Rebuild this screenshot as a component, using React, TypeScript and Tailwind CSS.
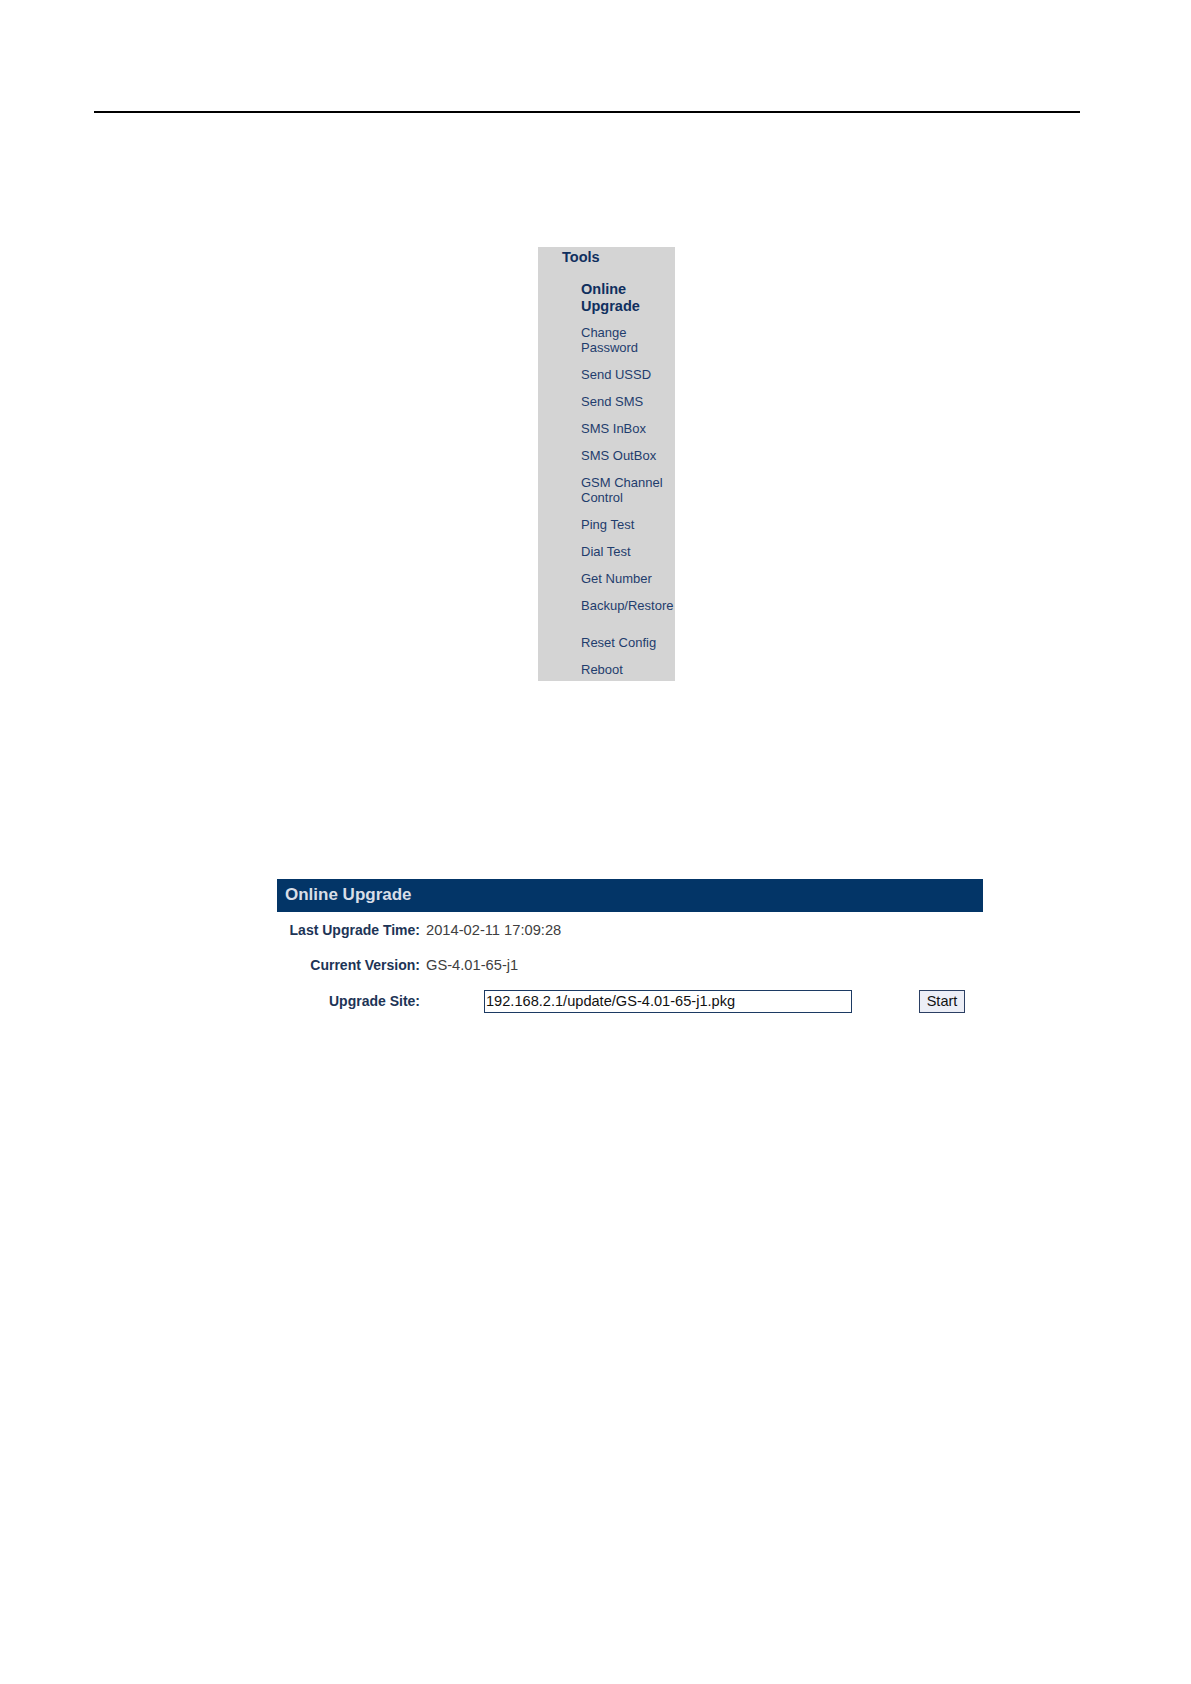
const menuItems: { lines: string[]; mt: string }[] = [
  { lines: ['Change', 'Password'], mt: 'mt-[10px]' },
  { lines: ['Send USSD'], mt: 'mt-[12px]' },
  { lines: ['Send SMS'], mt: 'mt-[12px]' },
  { lines: ['SMS InBox'], mt: 'mt-[12px]' },
  { lines: ['SMS OutBox'], mt: 'mt-[12px]' },
  { lines: ['GSM Channel', 'Control'], mt: 'mt-[12px]' },
  { lines: ['Ping Test'], mt: 'mt-[12px]' },
  { lines: ['Dial Test'], mt: 'mt-[12px]' },
  { lines: ['Get Number'], mt: 'mt-[12px]' },
  { lines: ['Backup/Restore'], mt: 'mt-[12px]' },
  { lines: ['Reset Config'], mt: 'mt-[22px]' },
  { lines: ['Reboot'], mt: 'mt-[12px]' },
];

function ToolsMenu() {
  return (
    <div className="ml-[538px] w-[137px] bg-[#d4d4d4] pt-px pb-[4px]">
      <div className="pl-[24px] text-[14.5px] leading-[18px] font-bold text-[#0f2f5e]">Tools</div>
      <div className="mt-[14.5px] flex flex-col pl-[43px]">
        <div className="text-[14.5px] leading-[17px] font-bold text-[#0f2f5e] whitespace-nowrap">
          Online
          <br />
          Upgrade
        </div>
        {menuItems.map((item) => (
          <div
            key={item.lines.join(' ')}
            className={`text-[13px] leading-[15px] text-[#1f3d6d] whitespace-nowrap ${item.mt}`}
          >
            {item.lines.map((l, i) => (
              <div key={i}>{l}</div>
            ))}
          </div>
        ))}
      </div>
    </div>
  );
}

function OnlineUpgrade() {
  return (
    <div className="ml-[277px] w-[706px]">
      <div className="h-[33px] bg-[#033567] flex items-center pl-[8px] text-[17px] font-bold text-[#d8dee7]">
        Online Upgrade
      </div>
      <div className="h-[37px] flex items-center text-[14px]">
        <div className="w-[143px] text-right font-bold text-[#1d3456]">Last Upgrade Time:</div>
        <div className="ml-[6px] text-[14.7px] text-[#404040]">2014-02-11 17:09:28</div>
      </div>
      <div className="h-[34px] flex items-center text-[14px]">
        <div className="w-[143px] text-right font-bold text-[#1d3456]">Current Version:</div>
        <div className="ml-[6px] text-[14.7px] text-[#404040]">GS-4.01-65-j1</div>
      </div>
      <div className="h-[37px] flex items-center text-[14px]">
        <div className="w-[143px] text-right font-bold text-[#1d3456]">Upgrade Site:</div>
        <input
          readOnly
          value="192.168.2.1/update/GS-4.01-65-j1.pkg"
          className="ml-[64px] w-[368px] h-[23px] border border-[#1c3a63] bg-white px-[1px] text-[14.6px] text-[#111] outline-none"
        />
        <button className="ml-[67px] w-[46px] h-[23px] border border-[#2b3f63] bg-[#eceef6] text-[14.5px] text-[#111]">
          Start
        </button>
      </div>
    </div>
  );
}

export default function App() {
  return (
    <div className="min-h-[1684px] w-[1191px] bg-white pt-[111px] font-['Liberation_Sans',Arial,sans-serif]">
      <div className="ml-[94px] w-[986px] border-t-2 border-black" />
      <div className="mt-[134px]">
        <ToolsMenu />
      </div>
      <div className="mt-[198px]">
        <OnlineUpgrade />
      </div>
    </div>
  );
}
